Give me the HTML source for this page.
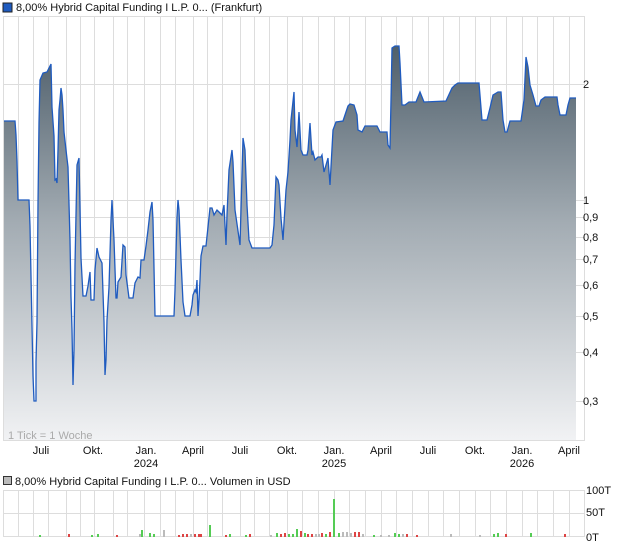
<!DOCTYPE html><html><head><style>body{margin:0;background:#fff;width:620px;height:546px;overflow:hidden;font-family:"Liberation Sans",sans-serif}</style></head><body>
<svg width="620" height="546" xmlns="http://www.w3.org/2000/svg" font-family="Liberation Sans, sans-serif">
<defs><linearGradient id="g" x1="0" y1="0" x2="0" y2="1"><stop offset="0" stop-color="#4f5f6b"/><stop offset="0.45" stop-color="#a3acb3"/><stop offset="1" stop-color="#f1f2f4"/></linearGradient></defs>
<rect x="3" y="3" width="9" height="9" fill="#1f5bbf" stroke="#222" stroke-width="1"/>
<text x="16" y="11" font-size="11" fill="#111">8,00% Hybrid Capital Funding I L.P. 0... (Frankfurt)</text>
<rect x="3.5" y="16.5" width="581" height="424" fill="#fff" stroke="#ddd"/>
<g stroke="#ddd" stroke-width="1">
<path d="M18.5 17V441M33.5 17V441M48.5 17V441M66.5 17V441M80.5 17V441M94.5 17V441M113.5 17V441M127.5 17V441M144.5 17V441M160.5 17V441M175.5 17V441M193.5 17V441M207.5 17V441M222.5 17V441M240.5 17V441M254.5 17V441M269.5 17V441M287.5 17V441M302.5 17V441M318.5 17V441M334.5 17V441M349.5 17V441M365.5 17V441M381.5 17V441M396.5 17V441M412.5 17V441M428.5 17V441M443.5 17V441M459.5 17V441M475.5 17V441M490.5 17V441M506.5 17V441M522.5 17V441M537.5 17V441M553.5 17V441M569.5 17V441"/>
<path d="M4 84.5H584M4 200.5H584M4 217.5H584M4 237.5H584M4 259.5H584M4 285.5H584M4 316.5H584M4 352.5H584M4 401.5H584"/>
</g>
<g id="d">
<polygon fill="url(#g)" points="4,440 4,121 15,121 16,135 17,161 18,200 29,200 30,226 31,276 32,326 33,376 34,401 36,401 36,362 37,322 38,203 39,123 40,80 43,73 47,72 50,66 51,64 52,107 54,136 55,180 56,179 57,183 58,150 59,110 60,100 61,88 62,95 63,110 64,132 66,150 68,167 70,240 71,297 72,330 73,385 74,350 75,265 77,165 79,158 81,258 83,296 86,296 88,286 90,272 91,300 94,300 95,270 97,248 99,257 102,263 104,322 105,375 106,360 107,320 109,287 111,220 112,200 114,240 116,298 117,298 118,282 121,277 123,245 125,247 126,275 129,298 133,298 135,283 138,277 140,278 141,260 144,260 146,246 148,230 150,212 152,202 153,220 155,316 174,316 175,290 177,217 178,200 179,210 181,260 183,302 185,316 190,316 192,305 193,295 195,290 196,292 197,280 198,316 199,300 200,280 201,256 203,246 206,246 208,227 210,208 212,208 214,215 217,210 219,212 222,215 224,205 226,245 227,215 229,170 232,150 233,162 235,210 240,245 243,138 245,150 247,205 249,240 252,248 270,248 272,245 274,225 276,177 278,180 279,185 280,202 281,218 283,240 286,190 288,172 290,140 291,120 294,92 295,130 297,147 299,112 301,150 303,155 307,155 308,150 310,123 312,155 313,152 315,160 318,157 321,157 322,155 324,172 328,158 330,185 333,130 336,122 343,121 345,115 348,106 350,104 354,105 357,115 358,130 362,132 365,126 377,126 380,132 387,132 388,145 390,148 391,100 392,48 395,46 399,46 400,63 402,105 405,105 409,102 416,102 420,92 424,102 446,101 452,88 455,85 458,83 479,83 482,120 487,120 490,108 493,95 498,92 501,92 503,120 505,132 507,132 510,121 521,121 524,100 526,57 528,67 530,85 533,95 536,106 539,106 541,100 545,97 557,97 558,105 560,115 566,115 568,105 570,98 576,98 576,440"/>
</g>
<polyline fill="none" stroke="#1f5bbf" stroke-width="1.3" points="4,121 15,121 16,135 17,161 18,200 29,200 30,226 31,276 32,326 33,376 34,401 36,401 36,362 37,322 38,203 39,123 40,80 43,73 47,72 50,66 51,64 52,107 54,136 55,180 56,179 57,183 58,150 59,110 60,100 61,88 62,95 63,110 64,132 66,150 68,167 70,240 71,297 72,330 73,385 74,350 75,265 77,165 79,158 81,258 83,296 86,296 88,286 90,272 91,300 94,300 95,270 97,248 99,257 102,263 104,322 105,375 106,360 107,320 109,287 111,220 112,200 114,240 116,298 117,298 118,282 121,277 123,245 125,247 126,275 129,298 133,298 135,283 138,277 140,278 141,260 144,260 146,246 148,230 150,212 152,202 153,220 155,316 174,316 175,290 177,217 178,200 179,210 181,260 183,302 185,316 190,316 192,305 193,295 195,290 196,292 197,280 198,316 199,300 200,280 201,256 203,246 206,246 208,227 210,208 212,208 214,215 217,210 219,212 222,215 224,205 226,245 227,215 229,170 232,150 233,162 235,210 240,245 243,138 245,150 247,205 249,240 252,248 270,248 272,245 274,225 276,177 278,180 279,185 280,202 281,218 283,240 286,190 288,172 290,140 291,120 294,92 295,130 297,147 299,112 301,150 303,155 307,155 308,150 310,123 312,155 313,152 315,160 318,157 321,157 322,155 324,172 328,158 330,185 333,130 336,122 343,121 345,115 348,106 350,104 354,105 357,115 358,130 362,132 365,126 377,126 380,132 387,132 388,145 390,148 391,100 392,48 395,46 399,46 400,63 402,105 405,105 409,102 416,102 420,92 424,102 446,101 452,88 455,85 458,83 479,83 482,120 487,120 490,108 493,95 498,92 501,92 503,120 505,132 507,132 510,121 521,121 524,100 526,57 528,67 530,85 533,95 536,106 539,106 541,100 545,97 557,97 558,105 560,115 566,115 568,105 570,98 576,98"/>
<text x="8" y="439" font-size="11" fill="#aaa">1 Tick = 1 Woche</text>
<g font-size="11" fill="#111">
<text x="583" y="88">2</text><text x="583" y="204">1</text><text x="583" y="221">0,9</text><text x="583" y="241">0,8</text><text x="583" y="263">0,7</text><text x="583" y="289">0,6</text><text x="583" y="320">0,5</text><text x="583" y="356">0,4</text><text x="583" y="405">0,3</text>
</g>
<g font-size="11" fill="#111" text-anchor="middle">
<text x="41" y="454">Juli</text><text x="93" y="454">Okt.</text><text x="146" y="454">Jan.</text><text x="146" y="467">2024</text><text x="193" y="454">April</text><text x="240" y="454">Juli</text><text x="287" y="454">Okt.</text><text x="334" y="454">Jan.</text><text x="334" y="467">2025</text><text x="381" y="454">April</text><text x="428" y="454">Juli</text><text x="475" y="454">Okt.</text><text x="522" y="454">Jan.</text><text x="522" y="467">2026</text><text x="569" y="454">April</text>
</g>
<rect x="3.5" y="476.5" width="8" height="8" fill="#bbb" stroke="#333"/>
<text x="15" y="485" font-size="11" fill="#111">8,00% Hybrid Capital Funding I L.P. 0... Volumen in USD</text>
<rect x="3.5" y="490.5" width="581" height="46" fill="#fff" stroke="#ddd"/>
<g stroke="#ddd"><path d="M4 513.5H584"/>
<path d="M18.5 491V537M33.5 491V537M48.5 491V537M66.5 491V537M80.5 491V537M94.5 491V537M113.5 491V537M127.5 491V537M144.5 491V537M160.5 491V537M175.5 491V537M193.5 491V537M207.5 491V537M222.5 491V537M240.5 491V537M254.5 491V537M269.5 491V537M287.5 491V537M302.5 491V537M318.5 491V537M334.5 491V537M349.5 491V537M365.5 491V537M381.5 491V537M396.5 491V537M412.5 491V537M428.5 491V537M443.5 491V537M459.5 491V537M475.5 491V537M490.5 491V537M506.5 491V537M522.5 491V537M537.5 491V537M553.5 491V537M569.5 491V537"/></g>
<g>
<rect x="39" y="535" width="2" height="2" fill="#5c5"/><rect x="68" y="534" width="2" height="3" fill="#d44"/><rect x="91" y="535" width="2" height="2" fill="#5c5"/><rect x="97" y="534" width="2" height="3" fill="#5c5"/><rect x="116" y="535" width="2" height="2" fill="#d44"/>
<rect x="139" y="534" width="2" height="3" fill="#bbb"/><rect x="141" y="530" width="2" height="7" fill="#5c5"/><rect x="149" y="533" width="2" height="4" fill="#5c5"/><rect x="153" y="534" width="2" height="3" fill="#5c5"/><rect x="163" y="530" width="2" height="7" fill="#bbb"/>
<rect x="178" y="535" width="2" height="2" fill="#d44"/><rect x="182" y="534" width="2" height="3" fill="#d44"/><rect x="186" y="534" width="2" height="3" fill="#d44"/><rect x="190" y="534" width="2" height="3" fill="#bbb"/><rect x="194" y="534" width="2" height="3" fill="#d44"/><rect x="198" y="534" width="2" height="3" fill="#d44"/><rect x="200" y="534" width="2" height="3" fill="#d44"/><rect x="209" y="525" width="2" height="12" fill="#5c5"/>
<rect x="225" y="535" width="2" height="2" fill="#d44"/><rect x="229" y="534" width="2" height="3" fill="#5c5"/><rect x="245" y="535" width="2" height="2" fill="#5c5"/><rect x="249" y="534" width="2" height="3" fill="#d44"/>
<rect x="270" y="535" width="2" height="2" fill="#bbb"/><rect x="276" y="533" width="2" height="4" fill="#5c5"/><rect x="280" y="534" width="2" height="3" fill="#d44"/><rect x="284" y="533" width="2" height="4" fill="#d44"/><rect x="288" y="534" width="2" height="3" fill="#5c5"/><rect x="292" y="534" width="2" height="3" fill="#5c5"/><rect x="296" y="529" width="2" height="8" fill="#5c5"/><rect x="300" y="531" width="2" height="6" fill="#d44"/><rect x="304" y="533" width="2" height="4" fill="#5c5"/><rect x="307" y="534" width="2" height="3" fill="#d44"/><rect x="311" y="534" width="2" height="3" fill="#d44"/><rect x="315" y="534" width="2" height="3" fill="#bbb"/><rect x="318" y="534" width="2" height="3" fill="#bbb"/><rect x="321" y="533" width="2" height="4" fill="#d44"/><rect x="325" y="534" width="2" height="3" fill="#5c5"/><rect x="329" y="532" width="2" height="5" fill="#d44"/><rect x="333" y="499" width="2" height="38" fill="#5c5"/><rect x="338" y="533" width="2" height="4" fill="#5c5"/><rect x="342" y="532" width="2" height="5" fill="#bbb"/><rect x="346" y="532" width="2" height="5" fill="#bbb"/><rect x="350" y="533" width="2" height="4" fill="#bbb"/><rect x="354" y="532" width="2" height="5" fill="#d44"/><rect x="358" y="532" width="2" height="5" fill="#d44"/><rect x="362" y="534" width="2" height="3" fill="#bbb"/>
<rect x="373" y="535" width="2" height="2" fill="#5c5"/><rect x="380" y="535" width="2" height="2" fill="#bbb"/><rect x="388" y="535" width="2" height="2" fill="#bbb"/><rect x="394" y="533" width="2" height="4" fill="#5c5"/><rect x="398" y="534" width="2" height="3" fill="#5c5"/><rect x="402" y="534" width="2" height="3" fill="#bbb"/><rect x="406" y="534" width="2" height="3" fill="#d44"/><rect x="416" y="535" width="2" height="2" fill="#d44"/>
<rect x="450" y="534" width="2" height="3" fill="#bbb"/><rect x="479" y="535" width="2" height="2" fill="#bbb"/><rect x="493" y="534" width="2" height="3" fill="#5c5"/><rect x="497" y="533" width="2" height="4" fill="#5c5"/><rect x="505" y="534" width="2" height="3" fill="#d44"/><rect x="530" y="533" width="2" height="4" fill="#5c5"/><rect x="564" y="534" width="2" height="3" fill="#d44"/>
</g>
<g font-size="11" fill="#111"><text x="586" y="494">100T</text><text x="586" y="516">50T</text><text x="586" y="541">0T</text></g>
</svg>
</body></html>
